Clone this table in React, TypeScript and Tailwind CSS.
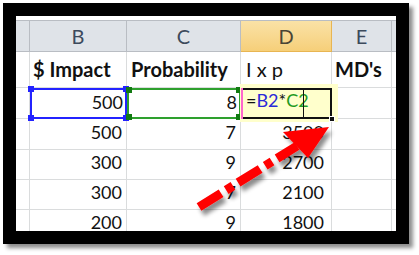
import React from 'react';

const cols = [
  { key: 'A', w: 'w-[14px]' },
  { key: 'B', w: 'w-[97px]' },
  { key: 'C', w: 'w-[114px]' },
  { key: 'D', w: 'w-[91px]' },
  { key: 'E', w: 'w-[60px]' },
  { key: 'F', w: 'w-[40px]' },
];

const rows = [
  ['500', '7', '3500'],
  ['300', '9', '2700'],
  ['300', '7', '2100'],
  ['200', '9', '1800'],
];

const font = { fontFamily: 'Lato, "Open Sans", sans-serif' };

// blue / green reference handles
const Handle: React.FC<{ className: string }> = ({ className }) => (
  <span className={`absolute w-[6px] h-[6px] ${className}`} />
);

const App: React.FC = () => {
  return (
    <div className="w-[419px] h-[255px] bg-white pl-[3px] pt-[3px]" style={font}>
      <div className="w-[406px] h-[241px] bg-black p-[13px] shadow-[4px_4px_4px_rgba(0,0,0,0.45)]">
        <div className="relative w-[380px] h-[215px] bg-white overflow-hidden pt-[4px]">
          {/* Column headers */}
          <div className="flex h-[32px] border-t border-[#b9bdc3]">
            {cols.map((c) => (
              <div
                key={c.key}
                className={`${c.w} shrink-0 flex items-center justify-center text-[20px] border-r border-b ${
                  c.key === 'D'
                    ? 'bg-gradient-to-b from-[#fae2a6] to-[#f6cf79] border-[#e8b552] text-[#4a4535]'
                    : 'bg-[#dfe3e8] border-[#b9bdc3] text-[#3c4a5c]'
                }`}
              >
                {c.key === 'A' || c.key === 'F' ? '' : c.key}
              </div>
            ))}
          </div>

          {/* Row 1: titles */}
          <div className="flex h-[36px] text-[20px] text-[#111]">
            <div className="w-[14px] shrink-0 border-r border-b border-[#dadcdd]" />
            <div className="w-[97px] shrink-0 border-r border-b border-[#dadcdd] flex items-end pb-[3px] pl-[3px] font-bold whitespace-nowrap">
              $ Impact
            </div>
            <div className="w-[114px] shrink-0 border-r border-b border-[#dadcdd] flex items-end pb-[3px] pl-[4px] font-bold whitespace-nowrap">
              Probability
            </div>
            <div className="w-[91px] shrink-0 border-r border-b border-[#dadcdd] flex items-end pb-[3px] pl-[5px] whitespace-nowrap">
              I x p
            </div>
            <div className="w-[60px] shrink-0 border-r border-b border-[#dadcdd] flex items-end pb-[3px] pl-[3px] font-bold whitespace-nowrap">
              MD's
            </div>
            <div className="w-[40px] shrink-0 border-b border-[#dadcdd]" />
          </div>

          {/* Row 2: formula being edited */}
          <div className="flex h-[31px] text-[18px] text-[#111]">
            <div className="w-[14px] shrink-0 border-r border-b border-[#dadcdd]" />
            <div className="relative w-[97px] shrink-0 flex items-end justify-end pb-[3px] pr-[4px]">
              <div className="absolute inset-0 border-2 border-[#2323ff]" />
              <Handle className="bg-[#2323ff] -left-[2px] -top-[2px]" />
              <Handle className="bg-[#2323ff] -right-[2px] -top-[2px]" />
              <Handle className="bg-[#2323ff] -left-[2px] -bottom-[2px]" />
              <Handle className="bg-[#2323ff] -right-[2px] -bottom-[2px]" />
              <span className="relative">500</span>
            </div>
            <div className="relative w-[114px] shrink-0 flex items-end justify-end pb-[3px] pr-[4px]">
              <div className="absolute inset-0 border-2 border-[#2ea02e]" />
              <Handle className="bg-[#127a12] -left-[1px] -top-[1px] w-[4px] h-[4px]" />
              <Handle className="bg-[#127a12] -right-[1px] -top-[1px] w-[4px] h-[4px]" />
              <Handle className="bg-[#127a12] -left-[1px] -bottom-[1px] w-[4px] h-[4px]" />
              <Handle className="bg-[#127a12] -right-[1px] -bottom-[1px] w-[4px] h-[4px]" />
              <span className="relative">8</span>
            </div>
            <div className="relative w-[91px] shrink-0">
              <div className="absolute -top-[4px] -left-[1px] -right-[6px] -bottom-[3px] bg-[#ffffcc]" />
              <div className="absolute inset-0 border-2 border-[#111] border-l-0 flex items-end pb-[3px] pl-[5px] whitespace-nowrap">
                <span>=</span>
                <span className="text-[#2a2ad8]">B2</span>
                <span>*</span>
                <span className="text-[#1f9a1f]">C2</span>
              </div>
              <div className="absolute left-0 top-0 bottom-0 w-[2px] bg-[#ff66cc]" />
              <div className="absolute top-0 bottom-0 left-[62px] w-px bg-[#111]" />
              <span className="absolute -right-[3px] -bottom-[3px] w-[6px] h-[6px] bg-[#111] border border-white" />
            </div>
            <div className="w-[60px] shrink-0 border-r border-b border-[#dadcdd]" />
            <div className="w-[40px] shrink-0 border-b border-[#dadcdd]" />
          </div>

          {/* Data rows */}
          {rows.map((r, i) => (
            <div key={i} className={`flex ${i === 0 ? 'h-[31px]' : 'h-[30px]'} text-[18px] text-[#111]`}>
              <div className="w-[14px] shrink-0 border-r border-b border-[#dadcdd]" />
              <div className="w-[97px] shrink-0 border-r border-b border-[#dadcdd] flex items-end justify-end pb-[3px] pr-[4px]">
                {r[0]}
              </div>
              <div className="w-[114px] shrink-0 border-r border-b border-[#dadcdd] flex items-end justify-end pb-[3px] pr-[4px]">
                {r[1]}
              </div>
              <div className="w-[91px] shrink-0 border-r border-b border-[#dadcdd] flex items-end justify-end pb-[3px] pr-[7px]">
                {r[2]}
              </div>
              <div className="w-[60px] shrink-0 border-r border-b border-[#dadcdd]" />
              <div className="w-[40px] shrink-0 border-b border-[#dadcdd]" />
            </div>
          ))}

          {/* Red dash-dot arrow */}
          <svg className="absolute left-0 top-0" width="380" height="215" viewBox="0 0 380 215">
            <defs>
              <filter id="sh" x="-20%" y="-20%" width="140%" height="140%">
                <feDropShadow dx="3" dy="5" stdDeviation="2" floodColor="#000" floodOpacity="0.45" />
              </filter>
            </defs>
            <g filter="url(#sh)">
              <line
                x1="183"
                y1="191"
                x2="281"
                y2="130"
                stroke="#ff0000"
                strokeWidth="9"
                strokeDasharray="26 6 8 6"
              />
              <polygon points="313,111 267,116 292,142" fill="#ff0000" />
            </g>
          </svg>
        </div>
      </div>
    </div>
  );
};

export default App;
